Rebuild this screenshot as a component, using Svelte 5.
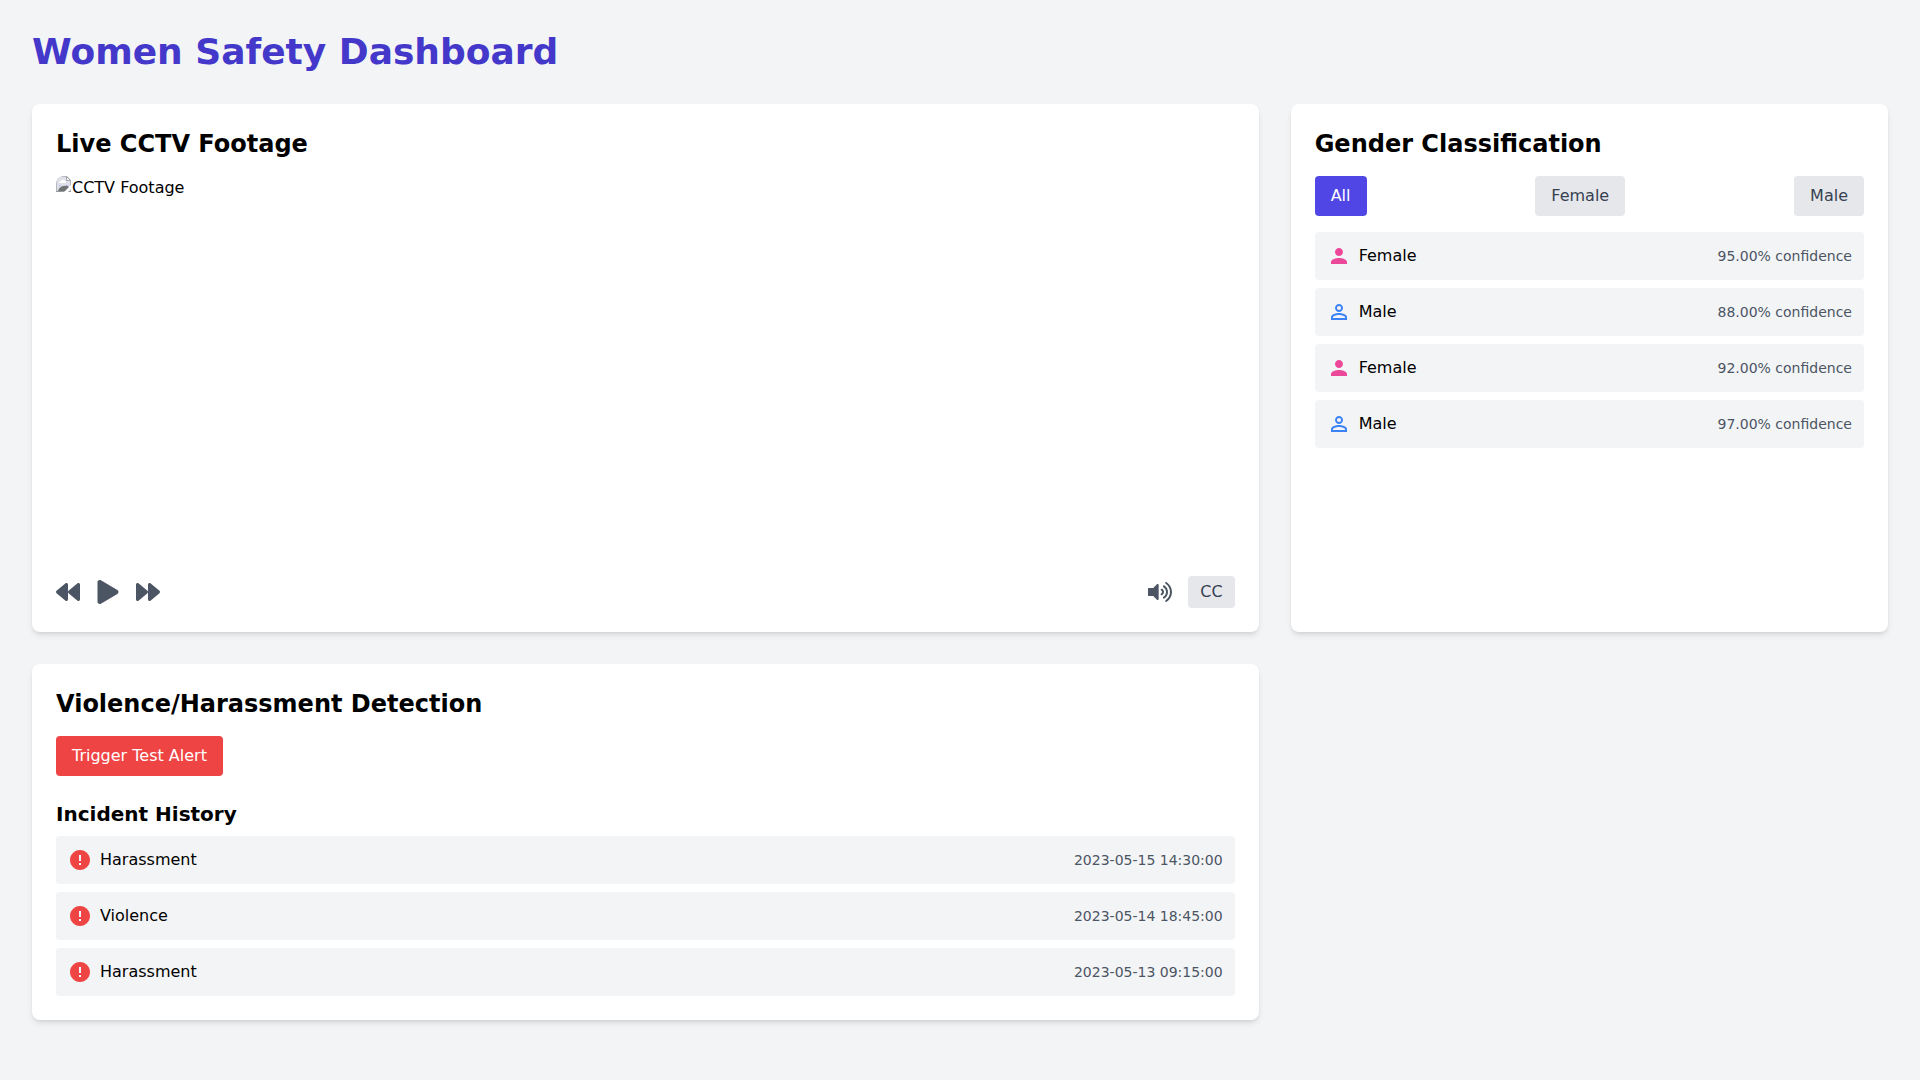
<script>
  const filters = ["All", "Female", "Male"];

  const people = [
    { id: 1, gender: "Female", confidence: 0.95 },
    { id: 2, gender: "Male", confidence: 0.88 },
    { id: 3, gender: "Female", confidence: 0.92 },
    { id: 4, gender: "Male", confidence: 0.97 },
  ];

  let incidents = $state([
    { id: 1, type: "Harassment", time: "2023-05-15 14:30:00" },
    { id: 2, type: "Violence", time: "2023-05-14 18:45:00" },
    { id: 3, type: "Harassment", time: "2023-05-13 09:15:00" },
  ]);

  let filter = $state("All");
  let playing = $state(false);
  let captions = $state(false);

  let visible = $derived(
    filter === "All" ? people : people.filter((p) => p.gender === filter),
  );

  function triggerAlert() {
    const time = new Date().toISOString().slice(0, 19).replace("T", " ");
    incidents = [{ id: Date.now(), type: "Violence", time }, ...incidents];
  }
</script>

<div class="page">
  <h1>Women Safety Dashboard</h1>

  <main class="grid">
    <section class="card wide">
      <h2>Live CCTV Footage</h2>

      <div class="footage">
        <svg class="broken" viewBox="0 0 16 16" aria-hidden="true">
          <path d="M0 0h11l4 4v12H0z" fill="#b4b7bb" />
          <path d="M1 1h9v4h4v10H1z" fill="#dde0e8" />
          <path d="M10.5 .5v4h4z" fill="#fff" stroke="#a3a6aa" />
          <path d="M3 7q0-2 2-2 1-2 3-1 2 0 2 3z" fill="#fff" />
          <path d="M3 9.5h2M10 9.5h2" stroke="#b9b9f0" />
          <path d="M2 15q1-4 5-5 4-1 6 1v4z" fill="#707274" />
          <path d="M0 15.5h15" stroke="#97999d" />
          <path d="M8 16l7-7h1v3l-4 4z" fill="#fff" />
        </svg>
        <span>CCTV Footage</span>
      </div>

      <div class="controls">
        <div class="group">
          <button class="icon" aria-label="Rewind">
            <svg viewBox="0 0 512 512">
              <path
                d="M11.5 280.6l192 160c20.6 17.2 52.5 2.8 52.5-24.6V96c0-27.4-31.9-41.8-52.5-24.6l-192 160c-15.3 12.8-15.3 36.4 0 49.2zm256 0l192 160c20.6 17.2 52.5 2.8 52.5-24.6V96c0-27.4-31.9-41.8-52.5-24.6l-192 160c-15.3 12.8-15.3 36.4 0 49.2z"
              />
            </svg>
          </button>
          <button
            class="icon"
            aria-label={playing ? "Pause" : "Play"}
            onclick={() => (playing = !playing)}
          >
            <svg viewBox="0 0 448 512">
              {#if playing}
                <path d="M48 32h96v448H48zM304 32h96v448h-96z" />
              {:else}
                <path
                  d="M424.4 214.7L72.4 6.6C43.8-10.3 0 6.1 0 47.9V464c0 37.5 40.7 60.1 72.4 41.3l352-208c31.4-18.5 31.5-64.1 0-82.6z"
                />
              {/if}
            </svg>
          </button>
          <button class="icon" aria-label="Fast forward">
            <svg viewBox="0 0 512 512">
              <path
                d="M500.5 231.4l-192-160C287.9 54.3 256 68.6 256 96v320c0 27.4 31.9 41.8 52.5 24.6l192-160c15.3-12.8 15.3-36.4 0-49.2zm-256 0l-192-160C31.9 54.3 0 68.6 0 96v320c0 27.4 31.9 41.8 52.5 24.6l192-160c15.3-12.8 15.3-36.4 0-49.2z"
              />
            </svg>
          </button>
        </div>

        <div class="group">
          <button class="icon" aria-label="Volume">
            <svg viewBox="0 0 576 512">
              <path
                d="M215.03 71.05L126.06 160H24c-13.26 0-24 10.74-24 24v144c0 13.25 10.74 24 24 24h102.06l88.97 88.95c15.03 15.03 40.97 4.47 40.97-16.97V88.02c0-21.46-25.96-31.98-40.97-16.97zm233.32-51.08c-11.17-7.33-26.18-4.24-33.51 6.95-7.34 11.17-4.22 26.18 6.95 33.51 66.27 43.49 105.82 116.6 105.82 195.58 0 78.98-39.55 152.09-105.82 195.58-11.17 7.32-14.29 22.34-6.95 33.5 7.04 10.71 21.93 14.56 33.51 6.95C528.27 439.58 576 351.33 576 256S528.27 72.43 448.35 19.97zM480 256c0-63.53-32.06-121.94-85.77-156.24-11.19-7.14-26.03-3.82-33.12 7.46s-3.78 26.21 7.41 33.36C408.27 165.97 432 209.11 432 256s-23.73 90.02-63.48 115.42c-11.19 7.14-14.5 22.07-7.41 33.36 6.51 10.36 21.12 15.14 33.12 7.46C447.94 377.94 480 319.54 480 256zm-141.77-76.87c-11.58-6.33-26.19-2.16-32.61 9.45-6.39 11.61-2.16 26.2 9.45 32.61C327.98 228.28 336 241.63 336 256c0 14.38-8.02 27.72-20.92 34.81-11.61 6.41-15.84 21-9.45 32.61 6.43 11.66 21.05 15.8 32.61 9.45 28.23-15.55 45.77-45 45.77-76.88s-17.54-61.32-45.78-76.86z"
              />
            </svg>
          </button>
          <button
            class="btn small"
            class:active={captions}
            aria-pressed={captions}
            onclick={() => (captions = !captions)}>CC</button
          >
        </div>
      </div>
    </section>

    <section class="card">
      <h2>Gender Classification</h2>

      <div class="filters">
        {#each filters as name}
          <button
            class="btn"
            class:active={filter === name}
            onclick={() => (filter = name)}>{name}</button
          >
        {/each}
      </div>

      <ul>
        {#each visible as person (person.id)}
          <li>
            {#if person.gender === "Female"}
              <svg class="female" viewBox="0 0 24 24" aria-hidden="true">
                <path
                  d="M12 12c2.21 0 4-1.79 4-4s-1.79-4-4-4-4 1.79-4 4 1.79 4 4 4zm0 2c-2.67 0-8 1.34-8 4v2h16v-2c0-2.66-5.33-4-8-4z"
                />
              </svg>
            {:else}
              <svg class="male" viewBox="0 0 24 24" aria-hidden="true">
                <path
                  d="M12 5.9a2.1 2.1 0 110 4.2 2.1 2.1 0 010-4.2m0 9c2.97 0 6.1 1.46 6.1 2.1v1.1H5.9V17c0-.64 3.13-2.1 6.1-2.1M12 4C9.79 4 8 5.79 8 8s1.79 4 4 4 4-1.79 4-4-1.79-4-4-4zm0 9c-2.67 0-8 1.34-8 4v3h16v-3c0-2.66-5.33-4-8-4z"
                />
              </svg>
            {/if}
            <span>{person.gender}</span>
            <span class="meta"
              >{(person.confidence * 100).toFixed(2)}% confidence</span
            >
          </li>
        {/each}
      </ul>
    </section>

    <section class="card wide">
      <h2>Violence/Harassment Detection</h2>
      <button class="btn danger" onclick={triggerAlert}>
        Trigger Test Alert
      </button>

      <h3>Incident History</h3>
      <ul>
        {#each incidents as incident (incident.id)}
          <li>
            <svg class="alert" viewBox="0 0 24 24" aria-hidden="true">
              <path
                d="M12 2C6.48 2 2 6.48 2 12s4.48 10 10 10 10-4.48 10-10S17.52 2 12 2zm1 15h-2v-2h2v2zm0-4h-2V7h2v6z"
              />
            </svg>
            <span>{incident.type}</span>
            <time class="meta">{incident.time}</time>
          </li>
        {/each}
      </ul>
    </section>
  </main>
</div>

<style>
  :global(body) {
    background: #f3f4f6;
  }

  .page {
    box-sizing: border-box;
    min-height: 100vh;
    padding: 32px;
    font-family: "DejaVu Sans", sans-serif;
    font-size: 16px;
    line-height: 24px;
    color: #000;
  }

  h1,
  h2,
  h3,
  ul {
    margin: 0;
    padding: 0;
  }

  h1 {
    margin-bottom: 32px;
    font-size: 36px;
    line-height: 40px;
    font-weight: 700;
    color: #4338ca;
  }

  h2 {
    margin-bottom: 16px;
    font-size: 24px;
    line-height: 32px;
    font-weight: 600;
  }

  h3 {
    margin: 24px 0 8px;
    font-size: 20px;
    line-height: 28px;
    font-weight: 600;
  }

  .grid {
    display: grid;
    grid-template-columns: repeat(3, minmax(0, 1fr));
    gap: 32px;
  }

  .card {
    padding: 24px;
    border-radius: 8px;
    background: #fff;
    box-shadow:
      0 4px 6px -1px rgb(0 0 0 / 0.1),
      0 2px 4px -2px rgb(0 0 0 / 0.1);
  }

  .wide {
    grid-column: span 2;
  }

  .footage {
    display: flex;
    align-items: flex-start;
    height: 384px;
    border-radius: 8px;
    overflow: hidden;
  }

  .broken {
    width: 16px;
    height: 16px;
  }

  .controls,
  .filters {
    display: flex;
    align-items: center;
    justify-content: space-between;
  }

  .controls {
    margin-top: 16px;
  }

  .filters {
    margin-bottom: 16px;
  }

  .group {
    display: flex;
    align-items: center;
    gap: 16px;
  }

  button {
    border: none;
    font: inherit;
    cursor: pointer;
  }

  .icon {
    padding: 0;
    background: none;
    color: #4b5563;
  }

  .icon svg,
  li svg {
    display: block;
    width: 24px;
    height: 24px;
    fill: currentColor;
  }

  .btn {
    padding: 8px 16px;
    border-radius: 4px;
    background: #e5e7eb;
    color: #374151;
  }

  .btn.small {
    padding: 4px 12px;
  }

  .btn.active {
    background: #4f46e5;
    color: #fff;
  }

  .btn.danger {
    background: #ef4444;
    color: #fff;
  }

  ul {
    display: flex;
    flex-direction: column;
    gap: 8px;
    list-style: none;
  }

  li {
    display: flex;
    align-items: center;
    gap: 8px;
    padding: 12px;
    border-radius: 4px;
    background: #f3f4f6;
  }

  .female {
    color: #ec4899;
  }

  .male {
    color: #3b82f6;
  }

  .alert {
    color: #ef4444;
  }

  .meta {
    margin-left: auto;
    font-size: 14px;
    line-height: 20px;
    color: #4b5563;
  }
</style>
